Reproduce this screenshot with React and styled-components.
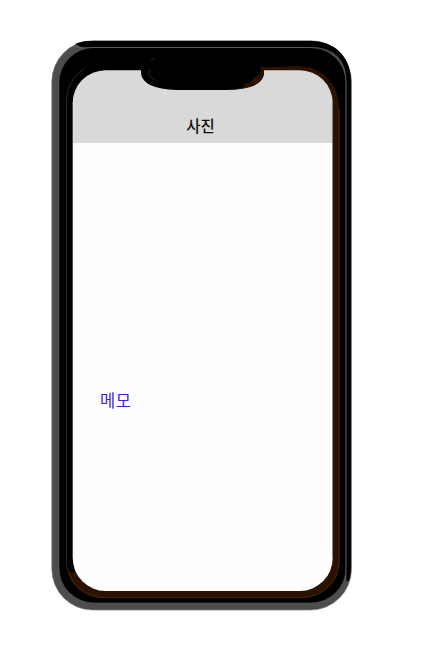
import React from 'react';
import styled, { createGlobalStyle } from 'styled-components';

const GlobalStyle = createGlobalStyle`
  * { box-sizing: border-box; }
  body { margin: 0; background: #fff; }
`;

const Page = styled.main`
  min-height: 649px;
  padding: 40px 0 0 51px;
  background: #fff;
  font-family: 'Noto Sans CJK KR', sans-serif;
`;

const Phone = styled.div`
  position: relative;
  width: 301px;
  height: 571px;
  padding: 30px 19px 20px 22px;
`;

const Screen = styled.section`
  display: flex;
  flex-direction: column;
  height: 521px;
  border-radius: 33px;
  overflow: hidden;
  background: #fefefe;
`;

const Header = styled.header`
  display: flex;
  align-items: flex-end;
  justify-content: center;
  height: 73px;
  padding: 0 5px 6px 0;
  background: #d9d9d9;
`;

const Title = styled.h1`
  margin: 0;
  color: #111;
  font-size: 15.5px;
  font-weight: 500;
  line-height: 24px;
`;

const Content = styled.div`
  flex: 1;
  padding: 245px 28px 0 27px;
`;

const Memo = styled.p`
  margin: 0;
  color: #3a26d8;
  font-size: 16.5px;
  letter-spacing: 0.5px;
  line-height: 24px;
`;

const Bezel = styled.svg`
  position: absolute;
  inset: 0;
  pointer-events: none;
`;

function DeviceBezel() {
  return (
    <Bezel width="301" height="571" viewBox="51 40 301 571" fill="none" aria-hidden="true">
      <defs>
        <mask id="opening">
          <rect x="51" y="40" width="301" height="571" fill="#fff" />
          <rect x="72.7" y="70.2" width="260" height="520.8" rx="33" fill="#000" />
        </mask>
      </defs>
      <g mask="url(#opening)">
        <rect x="51.8" y="40.7" width="299.7" height="569.3" rx="41" fill="#4d4d4d" stroke="#777" strokeWidth=".6" />
        <path d="M75 44C80 41.5 86 41 94 41H311C336 41 351 58 351 81V565Q351 575 349 581H346V83Q346 48 311 48H83Z" fill="#000" />
        <rect x="59" y="47.5" width="287" height="555.5" rx="35" fill="#000" stroke="#555" strokeWidth=".6" />
        <path d="M75 45Q76 47.5 80 47.5H311Q346 47.5 346 83V581" stroke="#666" strokeWidth=".7" />
        <path d="M262 67.5L297 66C323 66 339.3 84 339.3 110V560C339.3 582 323 597.7 300 597.7H105C86 597.7 72 587 68 571L72 573L100 560V90H262Z" fill="#2d1100" />
        <path d="M84 69C72 77 66.3 88 66.3 104V559C66.3 582 83 597.7 105 597.7H300C323 597.7 339.3 582 339.3 560V110" stroke="#5b4032" strokeWidth=".6" />
      </g>
      <path d="M141 69V73C142 85 158 90 181 90H221C248 90 263 85 264 73V69Z" fill="#000" />
      <path d="M264 67V73C263 84 250 89.5 230 89.5L243 88L244 84C254 83 252 79 257 76Q263 73 260 67Z" fill="#2d1100" />
      <path d="M151 61C152 60 153 59 155 59M151 70C147 71 148 75 151 77L155 80M253 81L255 78" stroke="#443a34" strokeWidth=".7" />
      <path d="M72.6 143V558M332.7 103V558" stroke="#375b7d" strokeWidth=".6" />
    </Bezel>
  );
}

export default function App() {
  return (
    <>
      <GlobalStyle />
      <Page>
        <Phone>
          <Screen>
            <Header><Title>사진</Title></Header>
            <Content><Memo>메모</Memo></Content>
          </Screen>
          <DeviceBezel />
        </Phone>
      </Page>
    </>
  );
}
